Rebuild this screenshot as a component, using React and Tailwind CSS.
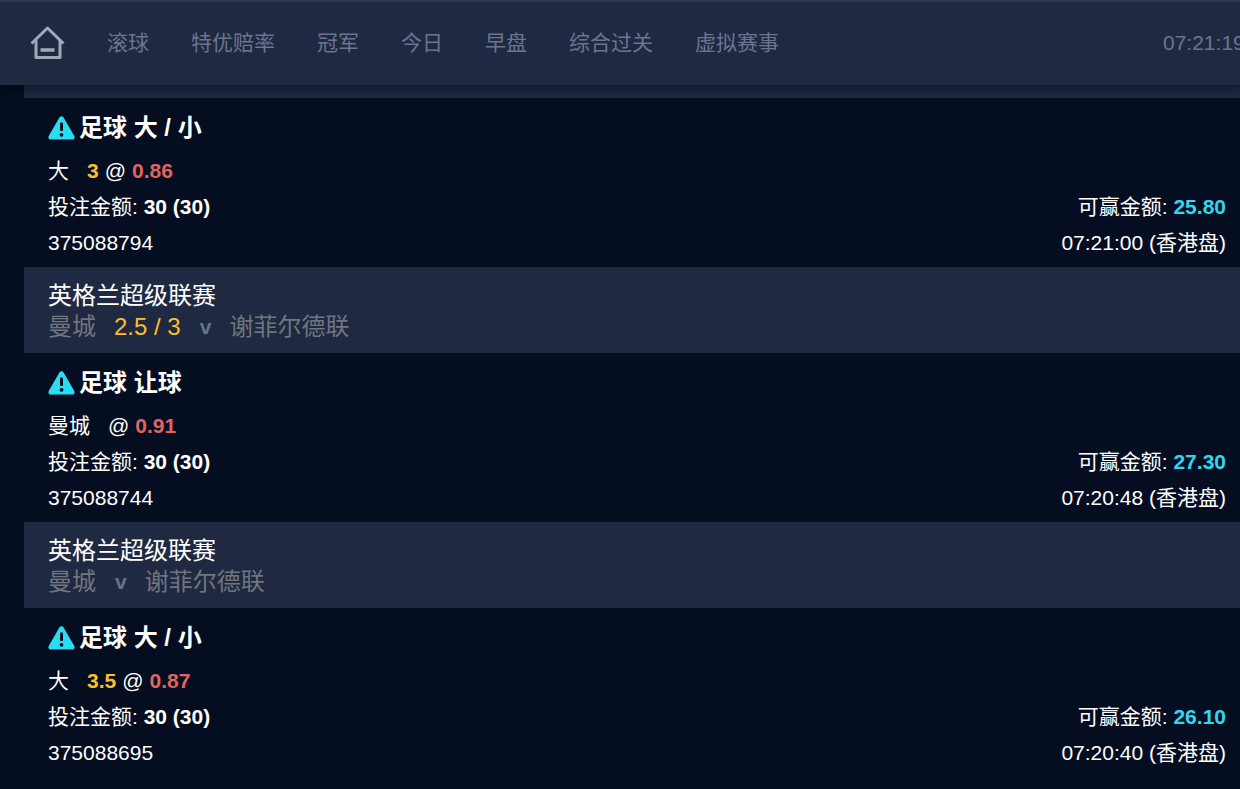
import React from 'react';

const FONT = '"Liberation Sans", "Noto Sans CJK SC", sans-serif';

const navItems = ['滚球', '特优赔率', '冠军', '今日', '早盘', '综合过关', '虚拟赛事'];

const bets = [
  {
    title: '足球 大 / 小',
    pick: '大',
    line: '3',
    odds: '0.86',
    stake: '30 (30)',
    win: '25.80',
    id: '375088794',
    time: '07:21:00 (香港盘)',
    league: '英格兰超级联赛',
    home: '曼城',
    handicap: '2.5 / 3',
    away: '谢菲尔德联',
  },
  {
    title: '足球 让球',
    pick: '曼城',
    odds: '0.91',
    stake: '30 (30)',
    win: '27.30',
    id: '375088744',
    time: '07:20:48 (香港盘)',
    league: '英格兰超级联赛',
    home: '曼城',
    away: '谢菲尔德联',
  },
  {
    title: '足球 大 / 小',
    pick: '大',
    line: '3.5',
    odds: '0.87',
    stake: '30 (30)',
    win: '26.10',
    id: '375088695',
    time: '07:20:40 (香港盘)',
  },
];

const HomeIcon = () => (
  <svg width="36" height="36" viewBox="0 0 36 36" fill="none" stroke="#a3a8b6" strokeWidth="3">
    <path d="M1.5 18.5 L17.5 3 L33.5 18.5" strokeLinejoin="round" />
    <path d="M6 15 V32.5 H30 V15" strokeLinejoin="round" />
    <path d="M10.5 25 H24.5" strokeWidth="3.5" />
  </svg>
);

const WarningIcon = () => (
  <svg width="27" height="24" viewBox="0 0 27 24" className="shrink-0">
    <path
      d="M11.4 1.6 a2.4 2.4 0 0 1 4.2 0 L26.3 20 a2.4 2.4 0 0 1 -2.1 3.6 H2.8 A2.4 2.4 0 0 1 .7 20 Z"
      fill="#2adcf2"
    />
    <rect x="12" y="6.5" width="3" height="8.5" rx="1" fill="#050d21" />
    <circle cx="13.5" cy="18.8" r="1.9" fill="#050d21" />
  </svg>
);

const BetCard = ({ bet }) => (
  <div className="pt-3 pb-[6px] pl-12 pr-[14px] text-[21px] text-white">
    <div className="flex h-9 mb-[7px] items-center gap-[4px] text-2xl font-bold">
      <WarningIcon />
      <span>{bet.title}</span>
    </div>
    <div className="flex h-9 items-center">
      <span className="mr-[18px]">{bet.pick}</span>
      {bet.line && <span className="mr-[6px] font-bold text-[#fbbf2e]">{bet.line}</span>}
      <span>@</span>
      <span className="ml-[6px] font-bold text-[#e2645f]">{bet.odds}</span>
    </div>
    <div className="flex h-9 items-center justify-between">
      <span>
        投注金额: <b>{bet.stake}</b>
      </span>
      <span>
        可赢金额: <b className="text-[#2fd8ee]">{bet.win}</b>
      </span>
    </div>
    <div className="flex h-9 items-center justify-between">
      <span>{bet.id}</span>
      <span>{bet.time}</span>
    </div>
  </div>
);

const LeagueHeader = ({ bet }) => (
  <div className="ml-6 bg-[#1f2941] pl-6 pt-[13px] pb-[11px] text-2xl leading-[31px]">
    <div className="text-white">{bet.league}</div>
    <div className="flex gap-[18px] text-[#70757f]">
      <span>{bet.home}</span>
      {bet.handicap && <span className="text-[#fbbf2e]">{bet.handicap}</span>}
      <span className="pl-[1px] text-[21px] font-bold text-[#64748b]">v</span>
      <span>{bet.away}</span>
    </div>
  </div>
);

export default function App() {
  return (
    <div className="h-[789px] w-[1240px] overflow-hidden bg-[#050d21]" style={{ fontFamily: FONT }}>
      {/* Top nav */}
      <div className="relative z-10 flex h-[85px] items-center overflow-hidden border-t-2 border-[#2f3b4d] bg-[#1f2941] pb-[2px] pl-[30px] text-[21px] text-[#6b7590] shadow-[0_5px_8px_rgba(0,0,0,0.35)]">
        <HomeIcon />
        <div className="ml-[41px] flex gap-[42px]">
          {navItems.map((item) => (
            <span key={item}>{item}</span>
          ))}
        </div>
        <span className="absolute left-[1163px] whitespace-nowrap">07:21:19</span>
      </div>

      {/* Bet list */}
      <div>
        <div className="ml-6 h-[13px] bg-[#1f2941]" />
        {bets.map((bet) => (
          <div key={bet.id}>
            <BetCard bet={bet} />
            {bet.league && <LeagueHeader bet={bet} />}
          </div>
        ))}
      </div>
    </div>
  );
}
